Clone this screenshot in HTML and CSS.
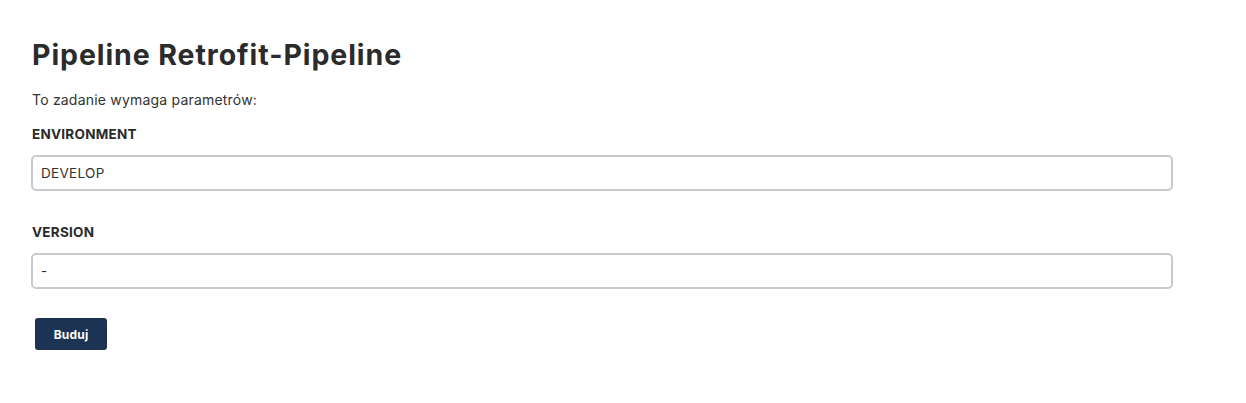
FILE: index.html
```html
<!DOCTYPE html>
<html lang="pl">
<head>
<meta charset="utf-8">
<title>Pipeline Retrofit-Pipeline</title>
<link rel="stylesheet" href="styles.css">
</head>
<body>
<main class="page">
  <h1 class="title">Pipeline Retrofit-Pipeline</h1>
  <p class="intro">To zadanie wymaga parametrów:</p>
  <form class="params">
    <div class="field">
      <label class="label" for="env">ENVIRONMENT</label>
      <input class="input" id="env" type="text" value="DEVELOP">
    </div>
    <div class="field">
      <label class="label" for="ver">VERSION</label>
      <input class="input" id="ver" type="text" value="-">
    </div>
    <div class="actions">
      <button class="button" type="button">Buduj</button>
    </div>
  </form>
</main>
</body>
</html>
```
FILE: styles.css
```css
* { box-sizing: border-box; }
body {
  margin: 0;
  background: #fff;
  color: #333;
  font-family: Inter, "Liberation Sans", sans-serif;
}
.page {
  padding: 37px 0 0 31px;
  width: 1173px;
}
.title {
  margin: 0 0 0 1px;
  font-size: 28.5px;
  line-height: 36px;
  font-weight: 700;
  color: #2b2b2b;
  letter-spacing: 0.92px;
}
.intro {
  margin: 19px 0 0 1px;
  font-size: 14px;
  line-height: 16px;
  color: #333;
  letter-spacing: 0.2px;
}
.params {
  display: flex;
  flex-direction: column;
}
.field {
  display: flex;
  flex-direction: column;
  margin-top: 18px;
}
.field + .field { margin-top: 33px; }
.label {
  margin-left: 1px;
  font-size: 13.5px;
  line-height: 16px;
  font-weight: 700;
  color: #2b2b2b;
  letter-spacing: 0.25px;
}
.input {
  margin-top: 13px;
  height: 36px;
  width: 100%;
  border: 2px solid #c6c9cd;
  border-radius: 5px;
  padding: 0 8px;
  font-family: inherit;
  font-size: 13.5px;
  letter-spacing: 0.3px;
  color: #333;
  background: #fff;
}
.actions {
  margin-top: 29px;
  padding-left: 4px;
}
.button {
  width: 72px;
  height: 32px;
  border: none;
  border-radius: 3px;
  background: #1d3354;
  color: #fff;
  font-family: inherit;
  font-size: 12px;
  font-weight: 700;
  letter-spacing: 0.2px;
}
```
